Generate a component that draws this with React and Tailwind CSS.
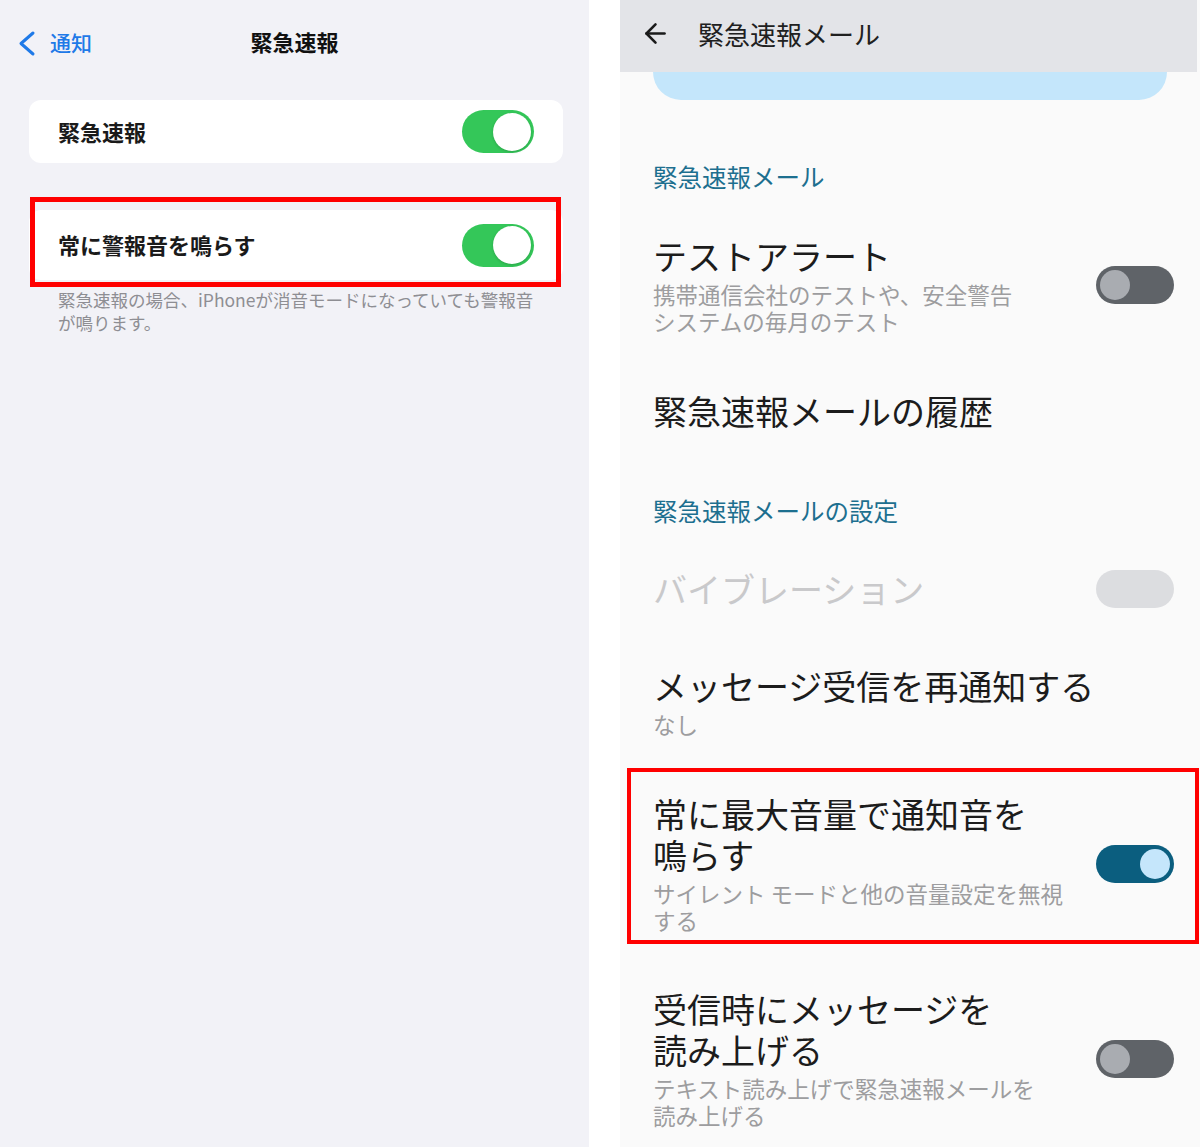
import { ArrowLeft } from "lucide-react";

const JP = "font-['Noto_Sans_CJK_JP','Noto_Sans',sans-serif]";

function IosToggle() {
  return (
    <div className="flex h-[43px] w-[72px] items-center justify-end rounded-full bg-[#34c759] pr-[3px]">
      <div className="h-[38px] w-[38px] rounded-full bg-white shadow-[0_1px_3px_rgba(0,0,0,0.18)]" />
    </div>
  );
}

function AndroidToggle({ state = "off" }) {
  if (state === "on") {
    return (
      <div className="flex h-[38px] w-[78px] shrink-0 items-center justify-end rounded-full bg-[#0b5e7f] pr-[4px]">
        <div className="h-[30px] w-[30px] rounded-full bg-[#c5e6fb]" />
      </div>
    );
  }
  if (state === "disabled") {
    return <div className="h-[38px] w-[78px] shrink-0 rounded-full bg-[#dcdde0]" />;
  }
  return (
    <div className="flex h-[38px] w-[78px] shrink-0 items-center rounded-full bg-[#5f6368] pl-[4px]">
      <div className="h-[30px] w-[30px] rounded-full bg-[#a9acb1]" />
    </div>
  );
}

function Row({ title, sub, toggle, muted = false, className = "" }) {
  return (
    <div className={`flex items-center justify-between pl-[33px] pr-[26px] ${className}`}>
      <div className="min-w-0">
        <div
          className={`whitespace-nowrap text-[34px] leading-[41px] ${muted ? "text-[#c9c9cb]" : "text-[#1c1c1c]"}`}
        >
          {title}
        </div>
        {sub && (
          <div className="mt-[5px] whitespace-nowrap text-[22.5px] leading-[27px] text-[#9d9d9f]">{sub}</div>
        )}
      </div>
      {toggle && <AndroidToggle state={toggle} />}
    </div>
  );
}

function IosPanel() {
  return (
    <div className="h-full w-[589px] shrink-0 bg-[#f2f2f7]">
      <div className="mt-[20px] grid h-[46px] grid-cols-[1fr_auto_1fr] items-center">
        <div className="flex items-center gap-[13px] pl-[17px] text-[#1f7ae8]">
          <svg width="20" height="27" viewBox="0 0 20 27" fill="none" aria-hidden>
            <path d="M16 3 L4 13.5 L16 24" stroke="currentColor" strokeWidth="3" strokeLinecap="round" strokeLinejoin="round" />
          </svg>
          <span className="text-[21px] font-medium">通知</span>
        </div>
        <div className="pb-[3px] text-[22px] font-bold text-[#111]">緊急速報</div>
        <div />
      </div>

      <div className="ml-[29px] mt-[34px] flex h-[63px] w-[534px] items-center justify-between rounded-[12px] bg-white px-[29px]">
        <span className="pb-[1px] text-[22px] font-semibold text-[#1a1a1a]">緊急速報</span>
        <IosToggle />
      </div>

      <div className="relative ml-[29px] mt-[47px] w-[534px]">
        <div className="flex h-[70px] items-center justify-between rounded-[12px] bg-white px-[29px]">
          <span className="pb-[2px] text-[22px] font-semibold text-[#1a1a1a]">常に警報音を鳴らす</span>
          <IosToggle />
        </div>
        <div className="pointer-events-none absolute -bottom-[7px] -top-[13px] left-[1px] right-[2px] border-[5px] border-[#ff0000]" />
      </div>

      <p className="ml-[58px] mt-[8px] whitespace-nowrap text-[17.5px] leading-[23px] text-[#8e8e93]">
        緊急速報の場合、iPhoneが消音モードになっていても警報音
        <br />
        が鳴ります。
      </p>
    </div>
  );
}

function AndroidPanel() {
  return (
    <div className="h-full w-[580px] shrink-0 bg-[#fafafa]">
      <div className="mr-[3px] flex h-[72px] items-center bg-[#e3e4e8] pb-[6px] pl-[20px]">
        <ArrowLeft size={31} strokeWidth={2} className="text-[#1a1a1a]" />
        <span className="ml-[27px] text-[26px] text-[#202020]">緊急速報メール</span>
      </div>
      <div className="mx-[33px] h-[28px] rounded-b-[28px] bg-[#c4e6fb]" />

      <div className="mt-[61px] pl-[33px] text-[24.5px] leading-[32px] text-[#1d6f8f]">緊急速報メール</div>

      <Row
        className="mt-[42px]"
        title="テストアラート"
        sub={
          <>
            携帯通信会社のテストや、安全警告
            <br />
            システムの毎月のテスト
          </>
        }
        toggle="off"
      />

      <Row className="mt-[55px]" title="緊急速報メールの履歴" />

      <div className="mt-[64px] pl-[33px] text-[24.5px] leading-[32px] text-[#1d6f8f]">緊急速報メールの設定</div>

      <Row className="mt-[41px]" title="バイブレーション" toggle="disabled" muted />

      <div className="mt-[56px] pl-[33px]">
        <div className="text-[34px] leading-[41px] text-[#1c1c1c]">メッセージ受信を再通知する</div>
        <div className="mt-[5px] text-[22.5px] leading-[27px] text-[#9d9d9f]">なし</div>
      </div>

      <div className="relative mt-[55px]">
        <Row
          title={
            <>
              常に最大音量で通知音を
              <br />
              鳴らす
            </>
          }
          sub={
            <>
              サイレント モードと他の音量設定を無視
              <br />
              する
            </>
          }
          toggle="on"
        />
        <div className="pointer-events-none absolute -bottom-[10px] -top-[25px] left-[7px] right-[1px] border-[4px] border-[#ff0000]" />
      </div>

      <Row
        className="mt-[54px]"
        title={
          <>
            受信時にメッセージを
            <br />
            読み上げる
          </>
        }
        sub={
          <>
            テキスト読み上げで緊急速報メールを
            <br />
            読み上げる
          </>
        }
        toggle="off"
      />
    </div>
  );
}

export default function App() {
  return (
    <div className={`flex h-[1147px] w-[1200px] overflow-hidden bg-white ${JP}`}>
      <IosPanel />
      <div className="w-[31px] shrink-0 bg-white" />
      <AndroidPanel />
    </div>
  );
}
